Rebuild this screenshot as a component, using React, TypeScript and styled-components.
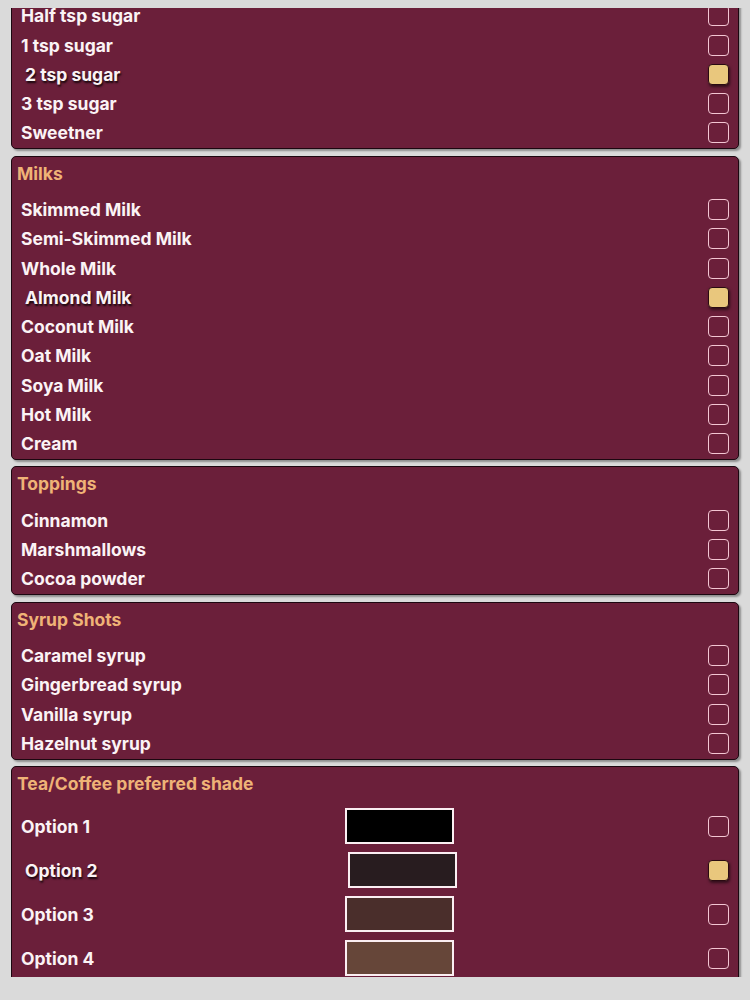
import React from 'react';
import styled, { createGlobalStyle } from 'styled-components';

const GlobalStyle = createGlobalStyle`
  html, body {
    margin: 0;
    padding: 0;
    background: #dadada;
  }
  body {
    font-family: Inter, "Liberation Sans", Arial, sans-serif;
  }
`;

const Page = styled.div`
  width: 750px;
  height: 1000px;
  padding-top: 8px;
  box-sizing: border-box;
  background: #dadada;
`;

const Scroller = styled.div`
  height: 969px;
  overflow: hidden;
`;

const List = styled.div`
  display: flex;
  flex-direction: column;
  gap: 6.5px;
  padding: 0 11px;
  margin-top: -75.5px;
`;

const Panel = styled.section`
  background: #6b1f3a;
  border: 1.5px solid #1c0710;
  border-radius: 5px;
  box-shadow: 2px 2px 2px rgba(0, 0, 0, 0.35);
  padding-bottom: 0.5px;
`;

const Title = styled.h2`
  margin: 0;
  height: 34px;
  line-height: 34px;
  padding-left: 5px;
  font-size: 17.5px;
  font-weight: 700;
  color: #efb377;
`;

const Rows = styled.div<{ $gap: number }>`
  margin-top: ${(p) => p.$gap}px;
  display: flex;
  flex-direction: column;
`;

const Row = styled.div<{ $h: number }>`
  display: grid;
  grid-template-columns: 324px 112px 1fr 21px;
  align-items: center;
  height: ${(p) => p.$h}px;
  padding: 0 9px;
`;

const Label = styled.span<{ $on: boolean }>`
  font-size: 17.5px;
  font-weight: 700;
  color: #fbf3f5;
  transform: translateX(${(p) => (p.$on ? 4 : 0)}px);
  text-shadow: ${(p) => (p.$on ? '1px 2px 2px rgba(0,0,0,0.8)' : 'none')};
`;

const Swatch = styled.span<{ $c: string; $on: boolean }>`
  width: 105px;
  height: 32px;
  background: ${(p) => p.$c};
  border: 2px solid #fbeef2;
  transform: translateX(${(p) => (p.$on ? 3 : 0)}px);
`;

const Box = styled.span<{ $on: boolean }>`
  grid-column: 4;
  width: 21px;
  height: 21px;
  box-sizing: border-box;
  border-radius: 4px;
  border: 1.5px solid ${(p) => (p.$on ? '#2a0a12' : '#f3c6d3')};
  background: ${(p) => (p.$on ? '#e9c77d' : 'transparent')};
  box-shadow: ${(p) => (p.$on ? '1px 2px 3px rgba(0,0,0,0.55)' : 'none')};
`;

type Item = { label: string; on?: boolean; swatch?: string };
type Group = { title: string; items: Item[]; rowH: number; gap: number };

const groups: Group[] = [
  {
    title: 'Sugar',
    rowH: 29.25,
    gap: 4.5,
    items: [
      { label: 'No sugar' },
      { label: 'Half tsp sugar' },
      { label: '1 tsp sugar' },
      { label: '2 tsp sugar', on: true },
      { label: '3 tsp sugar' },
      { label: 'Sweetner' },
    ],
  },
  {
    title: 'Milks',
    rowH: 29.25,
    gap: 4.5,
    items: [
      { label: 'Skimmed Milk' },
      { label: 'Semi-Skimmed Milk' },
      { label: 'Whole Milk' },
      { label: 'Almond Milk', on: true },
      { label: 'Coconut Milk' },
      { label: 'Oat Milk' },
      { label: 'Soya Milk' },
      { label: 'Hot Milk' },
      { label: 'Cream' },
    ],
  },
  {
    title: 'Toppings',
    rowH: 29.25,
    gap: 4.5,
    items: [{ label: 'Cinnamon' }, { label: 'Marshmallows' }, { label: 'Cocoa powder' }],
  },
  {
    title: 'Syrup Shots',
    rowH: 29.25,
    gap: 4.5,
    items: [
      { label: 'Caramel syrup' },
      { label: 'Gingerbread syrup' },
      { label: 'Vanilla syrup' },
      { label: 'Hazelnut syrup' },
    ],
  },
  {
    title: 'Tea/Coffee preferred shade',
    rowH: 44,
    gap: 3,
    items: [
      { label: 'Option 1', swatch: '#000000' },
      { label: 'Option 2', swatch: '#281c1f', on: true },
      { label: 'Option 3', swatch: '#4a2e2b' },
      { label: 'Option 4', swatch: '#664639' },
      { label: 'Option 5', swatch: '#8a6548' },
    ],
  },
];

const App: React.FC = () => {
  const [picked, setPicked] = React.useState<Record<string, boolean>>(() => {
    const init: Record<string, boolean> = {};
    groups.forEach((g) => g.items.forEach((i) => (init[g.title + i.label] = !!i.on)));
    return init;
  });

  return (
    <>
      <GlobalStyle />
      <Page>
        <Scroller>
          <List>
            {groups.map((g) => (
              <Panel key={g.title}>
                <Title>{g.title}</Title>
                <Rows $gap={g.gap}>
                  {g.items.map((i) => {
                    const key = g.title + i.label;
                    const on = picked[key];
                    return (
                      <Row
                        key={key}
                        $h={g.rowH}
                        onClick={() => setPicked((p) => ({ ...p, [key]: !p[key] }))}
                      >
                        <Label $on={on}>{i.label}</Label>
                        {i.swatch && <Swatch $c={i.swatch} $on={on} />}
                        <Box $on={on} />
                      </Row>
                    );
                  })}
                </Rows>
              </Panel>
            ))}
          </List>
        </Scroller>
      </Page>
    </>
  );
};

export default App;
